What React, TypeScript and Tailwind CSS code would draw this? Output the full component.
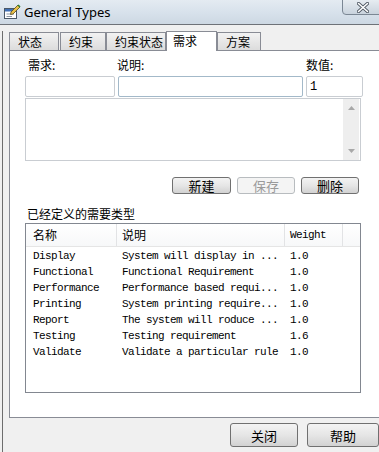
const cjk = "font-['Noto_Sans_CJK_SC','Noto_Sans',sans-serif]";
const mono = "font-['Liberation_Mono','Noto_Sans_CJK_SC',monospace]";

const tabs = ["状态", "约束", "约束状态", "需求", "方案"];
const tabWidths = ["w-[50px]", "w-[46px]", "w-[60px]", "w-[51px]", "w-[44px]"];
const tabGaps = ["", "ml-[1px]", "", "", ""];

const rows = [
  ["Display", "System will display in ...", "1.0"],
  ["Functional", "Functional Requirement", "1.0"],
  ["Performance", "Performance based requi...", "1.0"],
  ["Printing", "System printing require...", "1.0"],
  ["Report", "The system will roduce ...", "1.0"],
  ["Testing", "Testing requirement", "1.6"],
  ["Validate", "Validate a particular rule", "1.0"],
];

// little dialog + pencil icon in the title bar
const AppIcon = () => (
  <svg width="18" height="16" viewBox="0 0 18 16">
    <rect x="1.5" y="4.5" width="12" height="10" fill="#fff" stroke="#4a5868" />
    <rect x="2" y="5" width="11" height="2.5" fill="#3f6fb5" />
    <line x1="3.5" y1="10" x2="11" y2="10" stroke="#8a96a3" />
    <line x1="3.5" y1="12.5" x2="9" y2="12.5" stroke="#8a96a3" />
    <path d="M8 8 L15 1 L17 3 L10 10 L7.5 10.5 Z" fill="#e8c14a" stroke="#5b4b1d" strokeWidth="0.8" />
    <path d="M15 1 L17 3" stroke="#2f7d2f" strokeWidth="1.6" />
  </svg>
);

const Btn = ({ label, disabled, className }: { label: string; disabled?: boolean; className: string }) => (
  <div
    className={`flex items-center justify-center rounded-[3px] border ${
      disabled
        ? "border-[#b8bcbf] bg-[#f4f4f4] text-[#9a9a9a]"
        : "border-[#707070] bg-gradient-to-b from-[#f3f3f3] via-[#e6e6e6] to-[#d2d2d2] text-black"
    } ${cjk} text-[13px] leading-none ${className}`}
  >
    {label}
  </div>
);

export default function App() {
  return (
    <div className="relative h-[452px] w-[379px] overflow-hidden bg-[#f0f0f0]">
      {/* Title bar */}
      <div className="relative flex h-[25px] items-center border-b border-[#6e7278] bg-gradient-to-b from-[#e4ebf2] via-[#d8e2ec] to-[#cdd8e3] pl-[3px]">
        <AppIcon />
        <span className="ml-[3px] font-['Noto_Sans',sans-serif] text-[13px] leading-none text-black">General Types</span>
        <div className="absolute right-[-4px] top-[-2px] flex h-[17px] w-[41px] items-center justify-center rounded-b-[4px] border border-[#7b8794] bg-gradient-to-b from-[#e9eef3] to-[#c9d3dd]">
          <svg width="12" height="11" viewBox="0 0 12 11" className="mt-[1px]">
            <path d="M1.5 1.5 L10.5 9.5 M10.5 1.5 L1.5 9.5" stroke="#4d5661" strokeWidth="3.2" strokeLinecap="round" />
            <path d="M1.5 1.5 L10.5 9.5 M10.5 1.5 L1.5 9.5" stroke="#ffffff" strokeWidth="1.6" strokeLinecap="round" />
          </svg>
        </div>
      </div>

      {/* Body */}
      <div className="ml-[2px] h-[427px] border-l border-[#6d6d6d] pl-[6px]">
        {/* Tabs */}
        <div className="mt-[6px] flex items-end">
          {tabs.map((t, i) =>
            i === 3 ? (
              <div
                key={t}
                className={`relative z-10 -mb-px flex h-[20px] ${tabWidths[i]} items-start border border-b-0 border-[#898c95] bg-white pl-[6px] pt-[1px] ${cjk} text-[12px] leading-[16px] text-black`}
              >
                {t}
              </div>
            ) : (
              <div
                key={t}
                className={`flex h-[18px] ${tabWidths[i]} ${tabGaps[i]} items-center border border-b-0 border-[#898c95] bg-gradient-to-b from-[#f2f2f2] to-[#dcdcdc] pl-[8px] ${cjk} text-[12px] leading-none text-black`}
              >
                {t}
              </div>
            )
          )}
        </div>

        {/* Tab panel */}
        <div className="h-[368px] w-[380px] border border-[#898c95] bg-white pl-[15px] pt-[4px]">
          <div className={`flex h-[20px] items-center ${cjk} text-[12px] text-black`}>
            <span className="ml-[3px] w-[89px]">需求:</span>
            <span className="w-[189px]">说明:</span>
            <span>数值:</span>
          </div>
          <div className="mt-[1px] flex gap-[3px]">
            <div className="h-[21px] w-[90px] rounded-[2px] border border-[#c9cdd2] bg-white" />
            <div className="h-[21px] w-[185px] rounded-[2px] border border-[#a3b9c9] bg-white" />
            <div className={`flex h-[21px] w-[57px] items-center rounded-[2px] border border-[#c9cdd2] bg-white pl-[3px] ${mono} text-[12px] text-black`}>
              1
            </div>
          </div>
          <div className="mt-px flex h-[63px] w-[336px] justify-end border border-[#c9cdd2] bg-white pr-px">
            <div className="flex w-[16px] flex-col items-center justify-between bg-[#eeeeee] py-[7px]">
              <svg width="7" height="4" viewBox="0 0 7 4"><path d="M0 4 L3.5 0 L7 4 Z" fill="#a8a8a8" /></svg>
              <svg width="7" height="4" viewBox="0 0 7 4"><path d="M0 0 L3.5 4 L7 0 Z" fill="#a8a8a8" /></svg>
            </div>
          </div>

          <div className="mt-[16px] flex w-[334px] justify-end gap-[6px]">
            <Btn label="新建" className="h-[17px] w-[59px]" />
            <Btn label="保存" disabled className="h-[17px] w-[58px]" />
            <Btn label="删除" className="h-[17px] w-[58px]" />
          </div>

          <div className={`mt-[12px] ml-[2px] ${cjk} text-[12px] leading-[16px] text-black`}>已经定义的需要类型</div>

          {/* List view */}
          <div className="mt-[1px] h-[170px] w-[336px] border border-[#828790] bg-white">
            <div className="flex h-[23px] border-b border-[#e5e5e5] bg-gradient-to-b from-white to-[#f7f8f9]">
              <div className={`flex w-[91px] items-center border-r border-[#e2e3e5] pl-[7px] ${cjk} text-[12px]`}>名称</div>
              <div className={`flex w-[168px] items-center border-r border-[#e2e3e5] pl-[5px] ${cjk} text-[12px]`}>说明</div>
              <div className={`flex w-[58px] items-center border-r border-[#e2e3e5] pl-[5px] ${mono} text-[11px] tracking-[-0.6px]`}>Weight</div>
            </div>
            <div className={`pt-[1px] ${mono} text-[11px] tracking-[-0.6px] text-black`}>
              {rows.map((r) => (
                <div key={r[0]} className="grid h-[16px] grid-cols-[89px_168px_1fr] items-center pl-[7px] whitespace-pre">
                  <span>{r[0]}</span>
                  <span>{r[1]}</span>
                  <span>{r[2]}</span>
                </div>
              ))}
            </div>
          </div>
        </div>

        {/* Dialog buttons */}
        <div className="mt-[5px] flex gap-[9px] pl-[221px]">
          <Btn label="关闭" className="h-[24px] w-[72px]" />
          <Btn label="帮助" className="h-[24px] w-[72px] shrink-0" />
        </div>
      </div>
    </div>
  );
}
